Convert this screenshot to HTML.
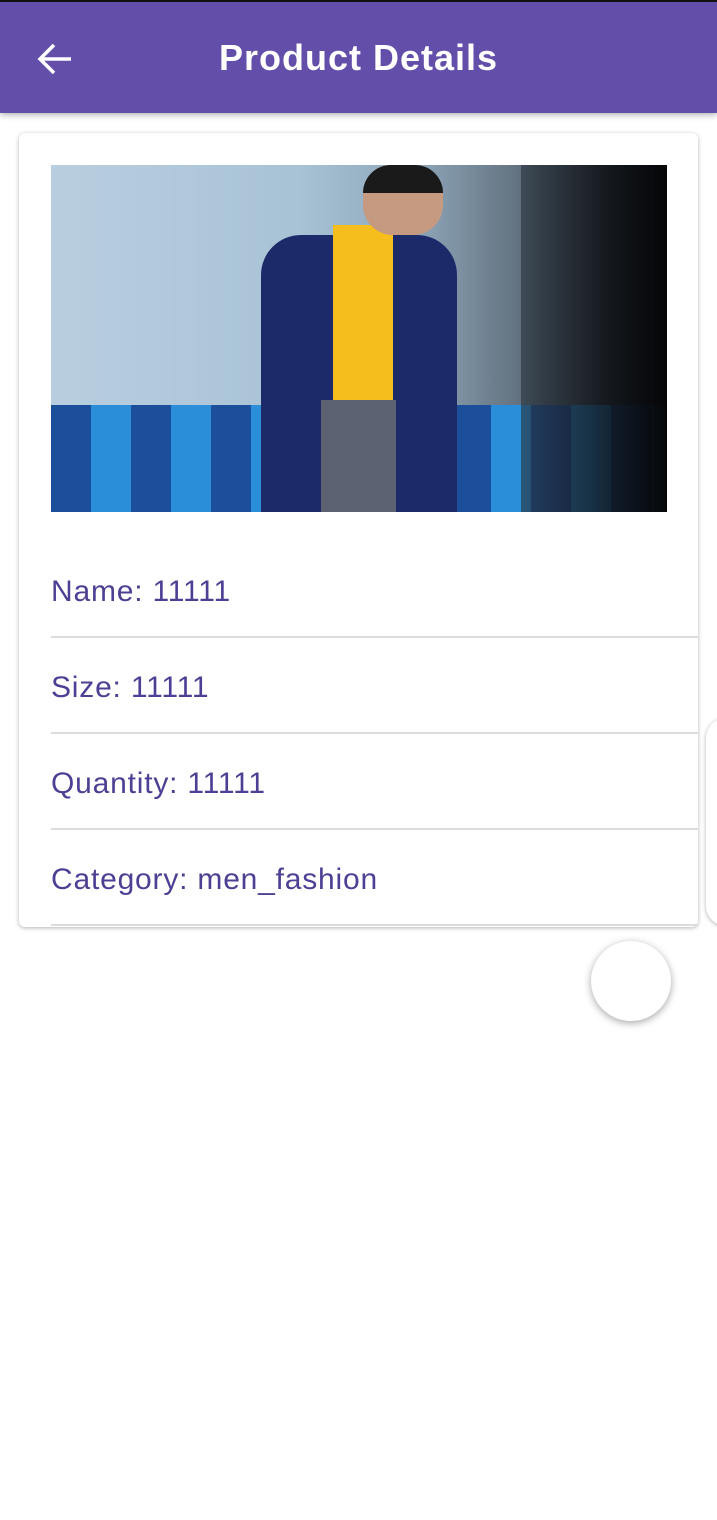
<!DOCTYPE html>
<html><head><meta charset="utf-8"><style>
body{margin:0;width:717px;height:1520px;background:#fff;position:relative;overflow:hidden;font-family:"Liberation Sans",sans-serif}
.bar{position:absolute;left:0;top:0;width:717px;height:113px;background:#634faa;border-top:2px solid #111;box-sizing:border-box;box-shadow:0 2px 6px rgba(0,0,0,.3)}
.title{position:absolute;left:219px;top:35px;color:#fff;font-size:36px;font-weight:bold;letter-spacing:1px}
.card{position:absolute;left:19px;top:133px;width:679px;height:794px;background:#fff;border-radius:6px;box-shadow:0 1px 4px rgba(0,0,0,.3)}
.img{position:absolute;left:32px;top:32px;width:616px;height:347px;overflow:hidden;background:linear-gradient(90deg,#b9cfe0 0%,#a8c2d6 40%,#8da5b8 60%,#4a5560 85%,#0b0d12 100%)}
.row{position:absolute;left:32px;width:647px;color:#4f3f94;font-size:30px;letter-spacing:0.8px;border-bottom:2px solid #ddd;height:94px;box-sizing:border-box}
.row span{position:absolute;top:31px}
.fab{position:absolute;left:591px;top:941px;width:80px;height:80px;border-radius:50%;background:#fff;box-shadow:0 2px 8px rgba(0,0,0,.35)}
.side{position:absolute;left:706px;top:718px;width:40px;height:208px;border-radius:20px;background:#fff;box-shadow:0 1px 4px rgba(0,0,0,.3)}
</style></head><body>
<div class="bar">
<svg style="position:absolute;left:36px;top:40px" width="36" height="34" viewBox="0 0 36 34"><path d="M18 3 L4 17 L18 31 M4 17 H35" fill="none" stroke="#fff" stroke-width="3.5"/></svg>
<div class="title">Product Details</div>
</div>
<div class="side"></div>
<div class="card">
<div class="img">
<div style="position:absolute;left:0;top:240px;width:616px;height:107px;background:repeating-linear-gradient(90deg,#1b4f9c 0 40px,#2a8fd8 40px 80px)"></div>
<div style="position:absolute;left:470px;top:0;width:146px;height:347px;background:linear-gradient(90deg,rgba(40,50,60,.6),#050608)"></div>
<div style="position:absolute;left:210px;top:70px;width:196px;height:277px;background:#1c2a6a;border-radius:40px 40px 0 0"></div>
<div style="position:absolute;left:282px;top:60px;width:60px;height:180px;background:#f5be1c"></div>
<div style="position:absolute;left:270px;top:235px;width:75px;height:112px;background:#5d6272"></div>
<div style="position:absolute;left:312px;top:0;width:80px;height:70px;background:#c59a80;border-radius:30px"></div>
<div style="position:absolute;left:312px;top:0;width:80px;height:28px;background:#1a1a1a;border-radius:30px 30px 0 0"></div>
</div>
<div class="row" style="top:411px"><span>Name: 11111</span></div>
<div class="row" style="top:507px"><span>Size: 11111</span></div>
<div class="row" style="top:603px"><span>Quantity: 11111</span></div>
<div class="row" style="top:699px"><span>Category: men_fashion</span></div>
</div>
<div class="fab"></div>
</body></html>
